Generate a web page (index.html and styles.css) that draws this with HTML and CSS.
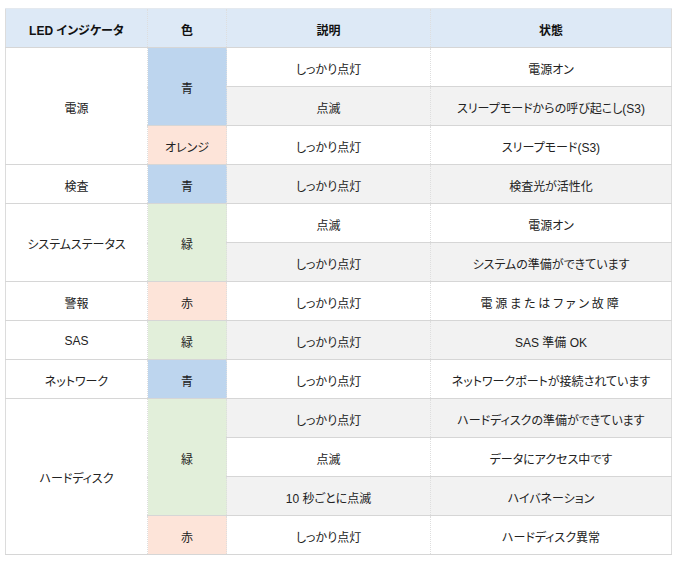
FILE: index.html
```html
<!DOCTYPE html>
<html lang="ja">
<head>
<meta charset="utf-8">
<link rel="stylesheet" href="styles.css">
</head>
<body>
<table class="led">
  <colgroup>
    <col class="c1"><col class="c2"><col class="c3"><col class="c4">
  </colgroup>
  <thead>
    <tr><th>LED インジケータ</th><th>色</th><th>説明</th><th>状態</th></tr>
  </thead>
  <tbody>
    <tr><td class="name" rowspan="3">電源</td><td class="blue" rowspan="2">青</td><td>しっかり点灯</td><td>電源オン</td></tr>
    <tr class="alt"><td>点滅</td><td>スリープモードからの呼び起こし(S3)</td></tr>
    <tr><td class="orange">オレンジ</td><td>しっかり点灯</td><td>スリープモード(S3)</td></tr>
    <tr class="alt"><td class="name">検査</td><td class="blue">青</td><td>しっかり点灯</td><td>検査光が活性化</td></tr>
    <tr><td class="name" rowspan="2">システムステータス</td><td class="green" rowspan="2">緑</td><td>点滅</td><td>電源オン</td></tr>
    <tr class="alt"><td>しっかり点灯</td><td>システムの準備ができています</td></tr>
    <tr><td class="name">警報</td><td class="red">赤</td><td>しっかり点灯</td><td class="wide">電源またはファン故障</td></tr>
    <tr class="alt"><td class="name">SAS</td><td class="green">緑</td><td>しっかり点灯</td><td>SAS 準備 OK</td></tr>
    <tr><td class="name">ネットワーク</td><td class="blue">青</td><td>しっかり点灯</td><td>ネットワークポートが接続されています</td></tr>
    <tr class="alt"><td class="name" rowspan="4">ハードディスク</td><td class="green" rowspan="3">緑</td><td>しっかり点灯</td><td>ハードディスクの準備ができています</td></tr>
    <tr><td>点滅</td><td>データにアクセス中です</td></tr>
    <tr class="alt"><td>10 秒ごとに点滅</td><td>ハイバネーション</td></tr>
    <tr><td class="red">赤</td><td>しっかり点灯</td><td>ハードディスク異常</td></tr>
  </tbody>
</table>
</body>
</html>
```
FILE: styles.css
```css
html, body {
  margin: 0;
  padding: 0;
  background: #ffffff;
}
body {
  padding: 8px 0 0 5px;
  font-family: "Liberation Sans", "Noto Sans CJK JP", sans-serif;
  font-size: 12px;
  color: #222222;
  font-feature-settings: "palt";
}
.led {
  border-collapse: collapse;
  table-layout: fixed;
  width: 666px;
  border: 1px solid #dcdcdc;
}
.c1 { width: 142px; }
.c2 { width: 79px; }
.c3 { width: 204px; }
.c4 { width: 241px; }
.led th, .led td {
  height: 36px;
  padding: 2px 4px 0;
  text-align: center;
  vertical-align: middle;
  border-top: 1px solid #d6d6d6;
  border-bottom: 1px solid #d6d6d6;
  border-left: 1px dotted #dedede;
  border-right: 1px dotted #dedede;
  white-space: nowrap;
}
.led th {
  background: #dde9f6;
  font-weight: bold;
  color: #111111;
  border-top: 1px solid #e4e9ef;
}
.led tr.alt td { background: #f2f2f2; }
.led td.name, .led tr.alt td.name { background: #ffffff; border-left: 1px solid #dcdcdc; }
.led td.blue, .led tr.alt td.blue { background: #bdd5ee; }
.led td.green, .led tr.alt td.green { background: #e2efda; }
.led td.red, .led tr.alt td.red { background: #fde4d9; }
.led td.orange, .led tr.alt td.orange { background: #fde4d9; }
.led td.wide { letter-spacing: 2.8px; }
```
